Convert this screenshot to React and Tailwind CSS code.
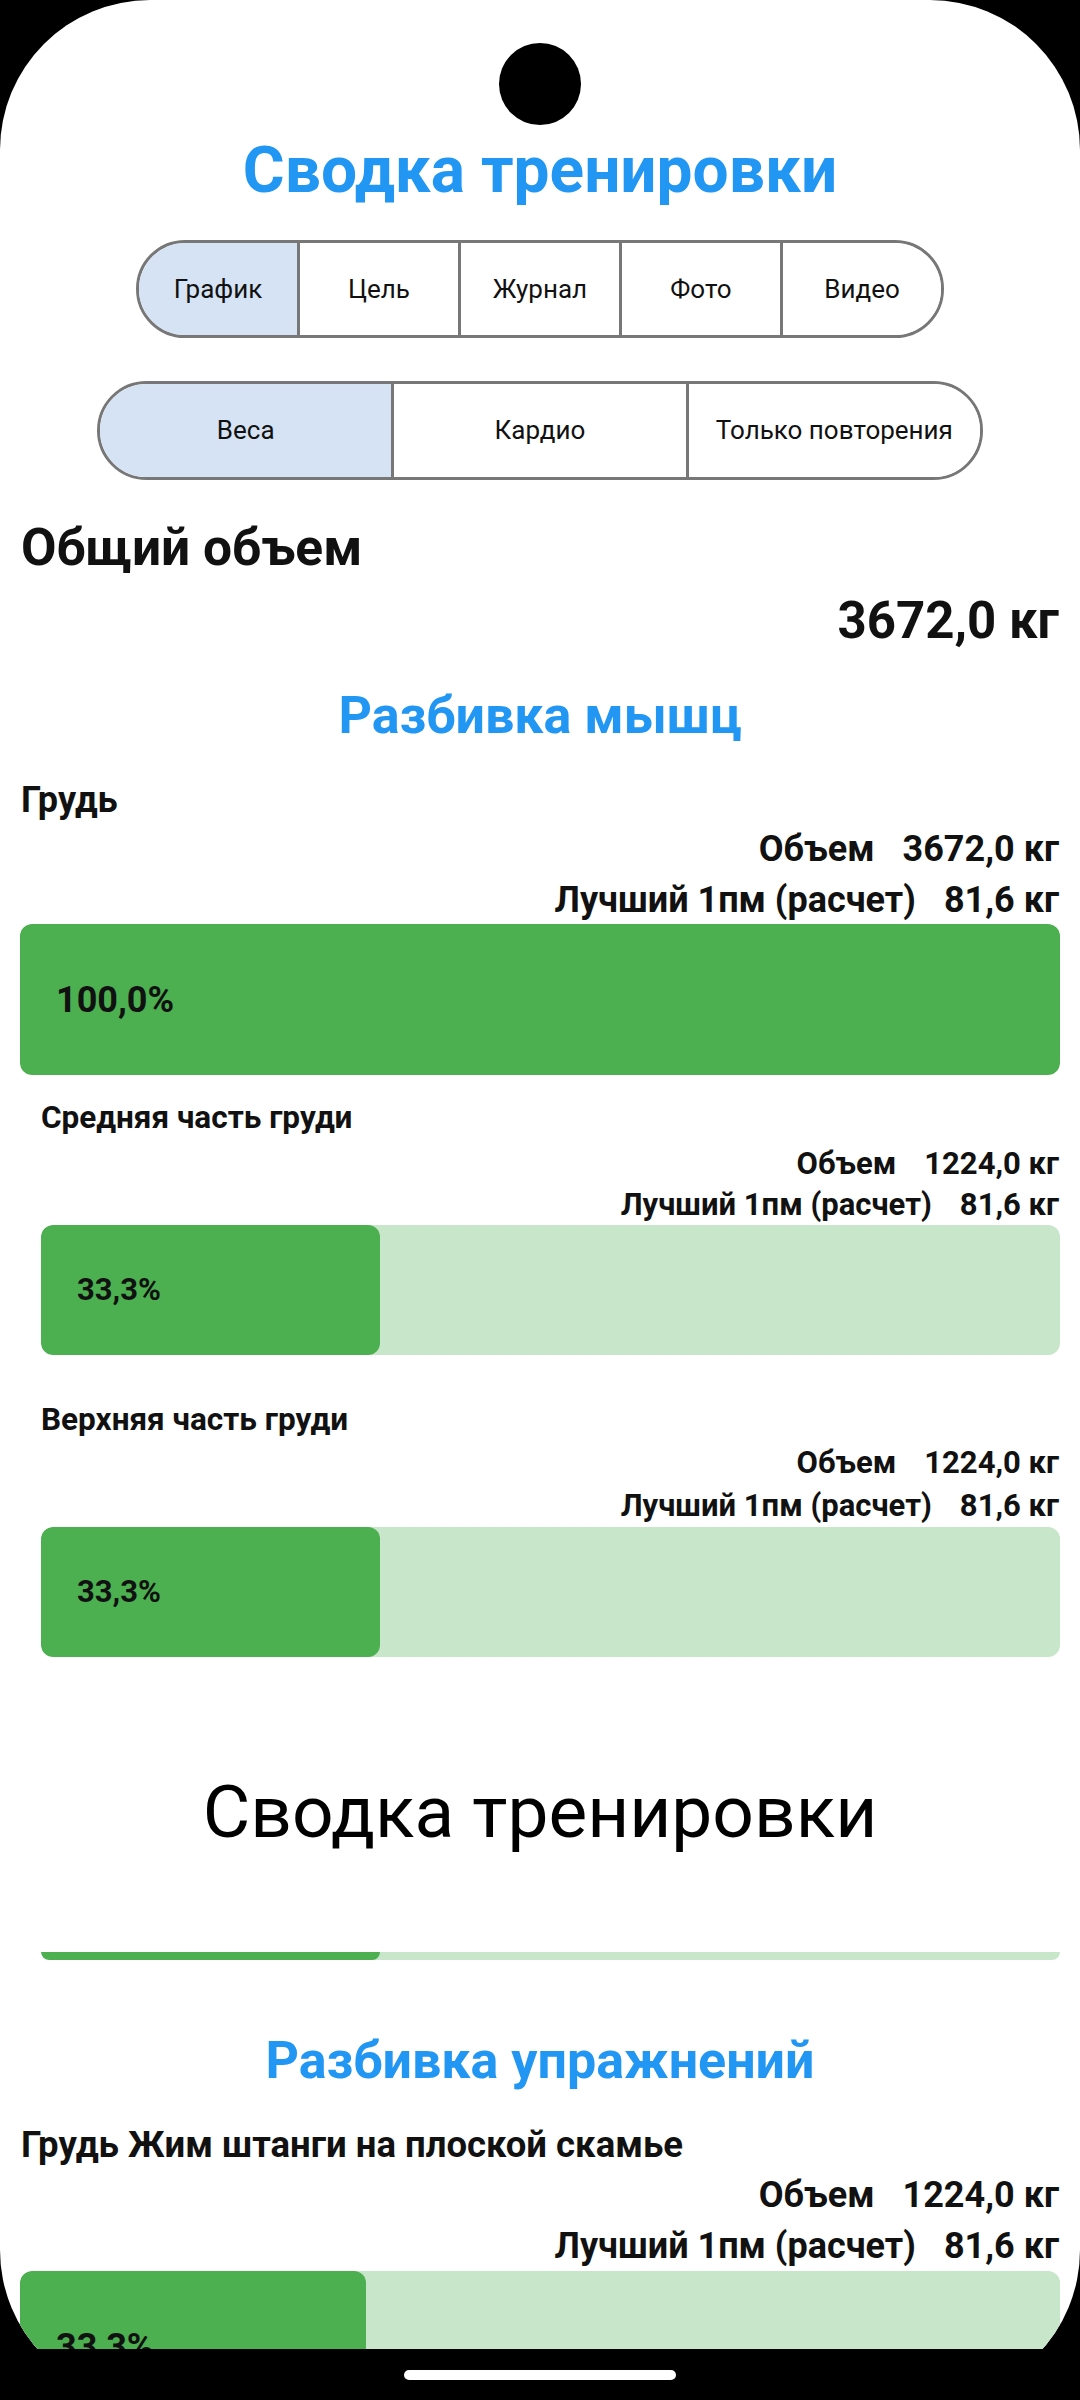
import React from "react";

const font = { fontFamily: "Roboto, 'Noto Sans', sans-serif" };

function Stat({ label, value, size, className = "" }) {
  return (
    <div className={"flex h-[40px] items-center justify-end gap-[28px] pr-[1px] font-bold leading-none text-[#111] " + size + " " + className}>
      <span>{label}</span>
      <span>{value}</span>
    </div>
  );
}

function Bar({ pct, label, h, size, className = "" }) {
  return (
    <div className={"relative flex overflow-hidden rounded-[12px] bg-[#C8E6C9] " + h + " " + className}>
      <div className="flex items-center rounded-[12px] bg-[#4CAF50] pl-[36px]" style={{ width: pct + "%" }}>
        <span className={"font-bold text-[#111] " + size}>{label}</span>
      </div>
    </div>
  );
}

export default function App() {
  return (
    <div className="relative h-[2400px] w-[1080px] overflow-hidden bg-black" style={font}>
      <div className="flex h-[2400px] flex-col overflow-hidden rounded-[150px] bg-white px-[20px]">
        <div className="mx-auto mt-[43px] h-[82px] w-[82px] shrink-0 rounded-full bg-black" />
        <div className="mt-[6px] flex h-[80px] shrink-0 items-center justify-center text-[64px] font-bold text-[#2196F3]">
          Сводка тренировки
        </div>

        <div className="mx-auto mt-[29px] flex h-[98px] w-[808px] shrink-0 overflow-hidden rounded-full border-[3px] border-[#777]">
          {["График", "Цель", "Журнал", "Фото", "Видео"].map((t, i) => (
            <div
              key={t}
              className={
                "flex flex-1 items-center justify-center text-[26px] text-[#111] " +
                (i > 0 ? "border-l-[3px] border-[#777] " : "") +
                (i === 0 ? "bg-[#D5E3F4]" : "bg-white")
              }
            >
              {t}
            </div>
          ))}
        </div>

        <div className="mx-auto mt-[43px] flex h-[99px] w-[886px] shrink-0 overflow-hidden rounded-full border-[3px] border-[#777]">
          {["Веса", "Кардио", "Только повторения"].map((t, i) => (
            <div
              key={t}
              className={
                "flex flex-1 items-center justify-center text-[26px] text-[#111] " +
                (i > 0 ? "border-l-[3px] border-[#777] " : "") +
                (i === 0 ? "bg-[#D5E3F4]" : "bg-white")
              }
            >
              {t}
            </div>
          ))}
        </div>

        <div className="mt-[38px] flex h-[60px] shrink-0 items-center pl-[1px] text-[51.5px] font-bold text-[#111]">
          Общий объем
        </div>
        <div className="mt-[13px] flex h-[60px] shrink-0 items-center justify-end pr-[1px] text-[51px] font-bold text-[#111]">
          3672,0 кг
        </div>

        <div className="mt-[35px] flex h-[60px] shrink-0 items-center justify-center text-[52px] font-bold text-[#2196F3]">
          Разбивка мышц
        </div>

        <div className="mt-[34px] flex h-[40px] shrink-0 items-center pl-[1px] text-[36px] font-bold text-[#111]">
          Грудь
        </div>
        <Stat className="mt-[9px] shrink-0" size="text-[36px]" label="Объем" value="3672,0 кг" />
        <Stat className="mt-[11px] shrink-0" size="text-[36px]" label="Лучший 1пм (расчет)" value="81,6 кг" />
        <Bar className="mt-[4px] shrink-0" h="h-[151px]" size="text-[36px]" pct={100} label="100,0%" />

        <div className="shrink-0 pl-[21px]">
          <div className="mt-[23px] flex h-[40px] items-center text-[31.5px] font-bold text-[#111]">
            Средняя часть груди
          </div>
          <Stat className="mt-[5px]" size="text-[31px]" label="Объем" value="1224,0 кг" />
          <Stat className="mt-[1px]" size="text-[31px]" label="Лучший 1пм (расчет)" value="81,6 кг" />
          <Bar className="mt-[1px]" h="h-[130px]" size="text-[31px]" pct={33.3} label="33,3%" />

          <div className="mt-[45px] flex h-[40px] items-center text-[31.5px] font-bold text-[#111]">
            Верхняя часть груди
          </div>
          <Stat className="mt-[2px]" size="text-[31px]" label="Объем" value="1224,0 кг" />
          <Stat className="mt-[3px]" size="text-[31px]" label="Лучший 1пм (расчет)" value="81,6 кг" />
          <Bar className="mt-[2px]" h="h-[130px]" size="text-[31px]" pct={33.3} label="33,3%" />
        </div>

        <div className="mt-[106px] flex h-[100px] shrink-0 items-center justify-center text-[73px] font-normal text-black">
          Сводка тренировки
        </div>

        <div className="ml-[21px] mt-[89px] flex h-[8px] shrink-0 overflow-hidden rounded-b-[12px] bg-[#C8E6C9]">
          <div className="w-[33.3%] rounded-b-[12px] bg-[#4CAF50]" />
        </div>

        <div className="mt-[71px] flex h-[60px] shrink-0 items-center justify-center text-[52px] font-bold text-[#2196F3]">
          Разбивка упражнений
        </div>

        <div className="mt-[34px] flex h-[40px] shrink-0 items-center pl-[1px] text-[36.5px] font-bold text-[#111]">
          Грудь Жим штанги на плоской скамье
        </div>
        <Stat className="mt-[10px] shrink-0" size="text-[36px]" label="Объем" value="1224,0 кг" />
        <Stat className="mt-[11px] shrink-0" size="text-[36px]" label="Лучший 1пм (расчет)" value="81,6 кг" />
        <Bar className="mt-[5px] shrink-0" h="h-[151px]" size="text-[36px]" pct={33.3} label="33,3%" />
      </div>

      <div className="absolute bottom-0 left-0 flex h-[51px] w-full items-center justify-center bg-black">
        <div className="h-[10px] w-[272px] rounded-full bg-white" />
      </div>
    </div>
  );
}
